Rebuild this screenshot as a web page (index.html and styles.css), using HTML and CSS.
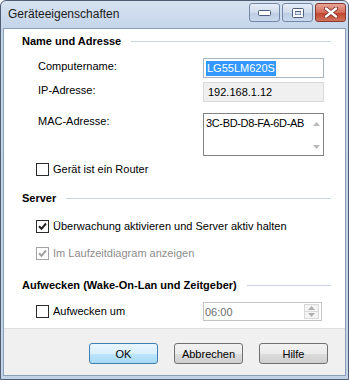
FILE: index.html
```html
<!DOCTYPE html>
<html lang="de">
<head>
  <meta charset="UTF-8">
  <title>Geräteeigenschaften</title>
  <link rel="stylesheet" href="styles.css">
</head>
<body>
  <div class="window">
    <div class="titlebar">
      <span class="title">Geräteeigenschaften</span>
      <div class="caption-buttons">
        <span class="cap">
          <svg width="13" height="6" viewBox="0 0 13 6"><rect x="0.5" y="0.5" width="12" height="5" rx="1" fill="#fff" stroke="#4a5d7a"/></svg>
        </span>
        <span class="cap">
          <svg width="12" height="10" viewBox="0 0 12 10"><rect x="0.5" y="0.5" width="11" height="9" rx="1" fill="#fff" stroke="#4a5d7a"/><rect x="3" y="3" width="6" height="4" fill="#4a5d7a"/><rect x="3.5" y="4" width="5" height="2.5" fill="#dce6f2"/></svg>
        </span>
        <span class="cap close">
          <svg width="14" height="11" viewBox="0 0 14 11"><path d="M2 1.5 L12 9.5 M12 1.5 L2 9.5" stroke="#7a2a22" stroke-width="4" stroke-linecap="round"/><path d="M2 1.5 L12 9.5 M12 1.5 L2 9.5" stroke="#fff" stroke-width="2.4" stroke-linecap="round"/></svg>
        </span>
      </div>
    </div>
    <div class="frame">
      <div class="content">
        <div class="panel">
          <div class="group-title"><span>Name und Adresse</span></div>
          <div class="field field-name">
            <span class="field-label">Computername:</span>
            <div class="textbox"><span class="selected">LG55LM620S</span></div>
          </div>
          <div class="field field-ip">
            <span class="field-label">IP-Adresse:</span>
            <div class="textbox readonly">192.168.1.12</div>
          </div>
          <div class="field field-mac">
            <span class="field-label">MAC-Adresse:</span>
            <div class="textbox multiline">
              <span class="mac-text">3C-BD-D8-FA-6D-AB</span>
              <div class="scrollbar">
                <svg width="7" height="4" viewBox="0 0 7 4"><path d="M0 4 L3.5 0 L7 4 Z" fill="#b8b8b8"/></svg>
                <svg width="7" height="4" viewBox="0 0 7 4"><path d="M0 0 L3.5 4 L7 0 Z" fill="#b8b8b8"/></svg>
              </div>
            </div>
          </div>
          <div class="check check-router"><span class="box"></span>Gerät ist ein Router</div>

          <div class="group-title group-server"><span>Server</span></div>
          <div class="check check-monitor"><span class="box"><svg width="9" height="9" viewBox="0 0 9 9"><path d="M1 4.2 L3.5 6.8 L8 1.5" fill="none" stroke="#222" stroke-width="2"/></svg></span>Überwachung aktivieren und Server aktiv halten</div>
          <div class="check check-chart disabled"><span class="box"><svg width="9" height="9" viewBox="0 0 9 9"><path d="M1 4.2 L3.5 6.8 L8 1.5" fill="none" stroke="#a0a0a0" stroke-width="2"/></svg></span>Im Laufzeitdiagram anzeigen</div>

          <div class="group-title group-wake"><span>Aufwecken (Wake-On-Lan und Zeitgeber)</span></div>
          <div class="wake-row">
            <div class="check"><span class="box"></span>Aufwecken um</div>
            <div class="timebox">
              <span>06:00</span>
              <div class="spin">
                <span class="spin-btn"><svg width="7" height="4" viewBox="0 0 7 4"><path d="M0 4 L3.5 0 L7 4 Z" fill="#b0b0b0"/></svg></span>
                <span class="spin-btn"><svg width="7" height="4" viewBox="0 0 7 4"><path d="M0 0 L3.5 4 L7 0 Z" fill="#b0b0b0"/></svg></span>
              </div>
            </div>
          </div>
        </div>
        <div class="footer">
          <button class="btn btn-default">OK</button>
          <button class="btn">Abbrechen</button>
          <button class="btn">Hilfe</button>
        </div>
      </div>
    </div>
  </div>
</body>
</html>
```

FILE: styles.css
```css
body {
  margin: 0;
  background: #ffffff;
  font-family: "Liberation Sans", Arial, sans-serif;
  font-size: 11px;
  color: #000000;
}

.window {
  width: 349px;
  height: 380px;
  box-sizing: border-box;
  border: 1px solid #4f5e72;
  border-radius: 6px 6px 0 0;
  background: linear-gradient(#d6e2f0, #c4d5ea 28px, #c2d3e8);
  display: flex;
  flex-direction: column;
}

/* title bar */
.titlebar {
  height: 27px;
  display: flex;
  align-items: center;
  padding: 0 2px 0 7px;
  flex-shrink: 0;
}

.title {
  font-size: 12px;
  color: #1b1b1b;
  margin-top: -1px;
}

.caption-buttons {
  margin-left: auto;
  align-self: flex-start;
  margin-top: 2px;
  display: flex;
  gap: 2px;
}

.cap {
  width: 29px;
  height: 17px;
  border: 1px solid #7388a6;
  border-radius: 3px;
  background: linear-gradient(#e6eef8, #d0dcec 50%, #bccce2 51%, #c9d8ec);
  display: flex;
  align-items: center;
  justify-content: center;
}

.cap.close {
  border-color: #8a3a32;
  background: linear-gradient(#e8a596, #d26b5a 50%, #c2412c 51%, #d0735c);
}

/* window frame */
.frame {
  flex: 1;
  padding: 0 2px 3px;
  display: flex;
}

.content {
  flex: 1;
  border: 1px solid #8a9fba;
  display: flex;
  flex-direction: column;
}

.panel {
  height: 300px;
  background: #ffffff;
  border-bottom: 1px solid #dfdfdf;
  padding: 5px 14px 0 18px;
  box-sizing: border-box;
  flex-shrink: 0;
}

/* group titles */
.group-title {
  display: flex;
  align-items: center;
  gap: 10px;
  font-weight: bold;
  line-height: 14px;
  height: 14px;
}

.group-title::after {
  content: "";
  flex: 1;
  height: 1px;
  background: #c6d4e6;
}

.group-server {
  margin-top: 15px;
}

.group-wake {
  margin-top: 18px;
}

/* fields */
.field {
  display: flex;
  align-items: flex-start;
  padding-left: 16px;
}

.field-label {
  width: 165px;
  line-height: 14px;
  padding-top: 1px;
}

.field-name {
  margin-top: 10px;
}

.field-ip {
  margin-top: 4px;
}

.field-mac {
  margin-top: 11px;
}

.textbox {
  width: 121px;
  height: 20px;
  box-sizing: border-box;
  border: 1px solid #a9b4c2;
  background: #ffffff;
  padding: 2px 2px 0 2px;
  line-height: 15px;
  white-space: nowrap;
  overflow: hidden;
}

.selected {
  background: #3399ff;
  color: #ffffff;
  display: inline-block;
  padding: 0 1px;
}

.textbox.readonly {
  background: #f0f0f0;
  border-color: #dadada;
  padding-left: 4px;
}

.textbox.multiline {
  height: 43px;
  border-color: #828282;
  display: flex;
  padding: 2px 0 0 2px;
}

.mac-text {
  flex: 1;
  line-height: 15px;
  letter-spacing: -0.35px;
}

.scrollbar {
  width: 13px;
  flex-shrink: 0;
  display: flex;
  flex-direction: column;
  justify-content: space-between;
  align-items: center;
  padding: 6px 0 6px;
}

/* checkboxes */
.check {
  display: flex;
  align-items: center;
  gap: 4px;
  line-height: 13px;
  padding-left: 14px;
  white-space: nowrap;
}

.check .box {
  width: 13px;
  height: 13px;
  box-sizing: border-box;
  border: 1px solid #2b2b2b;
  background: #ffffff;
  display: flex;
  align-items: center;
  justify-content: center;
}

.check.disabled {
  color: #8d8d8d;
}

.check.disabled .box {
  border-color: #a4a4a4;
}

.check-router {
  margin-top: 7px;
}

.check-monitor {
  margin-top: 15px;
}

.check-chart {
  margin-top: 14px;
}

/* wake row */
.wake-row {
  margin-top: 10px;
  display: flex;
  align-items: center;
  height: 19px;
}

.wake-row .check {
  width: 167px;
}

.timebox {
  width: 119px;
  height: 19px;
  box-sizing: border-box;
  border: 1px solid #c4c4c4;
  color: #6d6d6d;
  display: flex;
  align-items: center;
  padding-left: 1px;
}

.timebox span:first-child {
  flex: 1;
}

.spin {
  width: 15px;
  height: 15px;
  margin-right: 2px;
  display: flex;
  flex-direction: column;
  border: 1px solid #d8d8d8;
  box-sizing: border-box;
}

.spin-btn {
  flex: 1;
  display: flex;
  align-items: center;
  justify-content: center;
  background: #f4f4f4;
}

.spin-btn + .spin-btn {
  border-top: 1px solid #d8d8d8;
}

/* footer buttons */
.footer {
  flex: 1;
  background: #f0f0f0;
  display: flex;
  justify-content: flex-end;
  align-items: flex-start;
  gap: 16px;
  padding: 14px 17px 0 0;
}

.btn {
  width: 69px;
  height: 21px;
  font-family: "Liberation Sans", Arial, sans-serif;
  font-size: 11px;
  color: #000000;
  border: 1px solid #707070;
  border-radius: 3px;
  background: linear-gradient(#f2f2f2, #ebebeb 50%, #dddddd 51%, #cfcfcf);
  padding: 0;
}

.btn-default {
  border-color: #3c7fb1;
  background: linear-gradient(#eaf6fd, #d9f0fc 50%, #bee6fd 51%, #a7d9f5);
}
```
